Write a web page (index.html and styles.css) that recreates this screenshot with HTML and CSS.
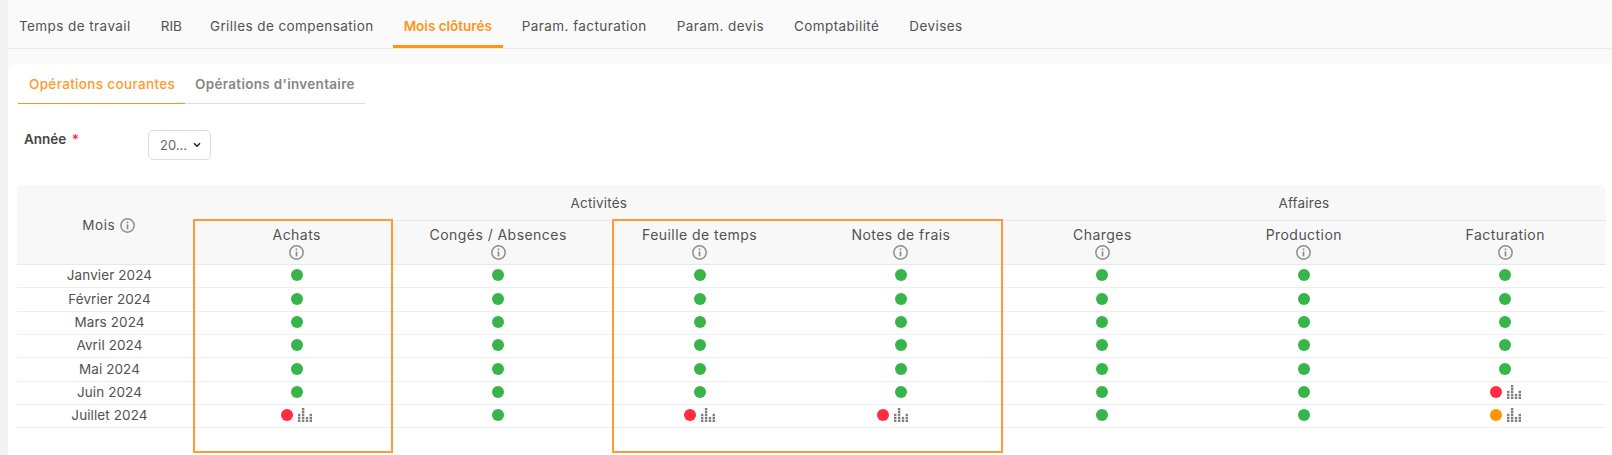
FILE: index.html
```html
<!DOCTYPE html>
<html lang="fr">
<head>
    <meta charset="utf-8">
    <title>Mois clôturés</title>
    <link rel="stylesheet" href="styles.css">
</head>
<body>
    <svg class="icon-defs" width="0" height="0">
        <symbol id="info" viewBox="0 0 14 14">
            <circle cx="7" cy="7" r="6.2" fill="none" stroke="#8e8e8e" stroke-width="1.4"/>
            <rect x="6.2" y="6" width="1.6" height="4.6" fill="#8e8e8e"/>
            <rect x="6.2" y="3.3" width="1.6" height="1.6" fill="#8e8e8e"/>
        </symbol>
        <symbol id="bars" viewBox="0 0 14 14">
            <g fill="#7e7e7e">
                <rect x="0" y="5.8" width="2.4" height="2.4"/><rect x="0" y="8.9" width="2.4" height="2.4"/><rect x="0" y="11.8" width="2.4" height="2.2"/>
                <rect x="3.9" y="0" width="2.4" height="2.4"/><rect x="3.9" y="2.9" width="2.4" height="2.4"/><rect x="3.9" y="5.8" width="2.4" height="2.4"/><rect x="3.9" y="8.9" width="2.4" height="2.4"/><rect x="3.9" y="11.8" width="2.4" height="2.2"/>
                <rect x="7.8" y="8.9" width="2.4" height="2.4"/><rect x="7.8" y="11.8" width="2.4" height="2.2"/>
                <rect x="11.6" y="5.8" width="2.4" height="2.4"/><rect x="11.6" y="8.9" width="2.4" height="2.4"/><rect x="11.6" y="11.8" width="2.4" height="2.2"/>
            </g>
        </symbol>
    </svg>

    <nav class="main-tabs">
        <a class="main-tab">Temps de travail</a>
        <a class="main-tab short">RIB</a>
        <a class="main-tab">Grilles de compensation</a>
        <a class="main-tab active">Mois clôturés</a>
        <a class="main-tab">Param. facturation</a>
        <a class="main-tab">Param. devis</a>
        <a class="main-tab">Comptabilité</a>
        <a class="main-tab">Devises</a>
    </nav>

    <div class="card">
        <div class="sub-tabs">
            <a class="sub-tab active">Opérations courantes</a>
            <a class="sub-tab">Opérations d'inventaire</a>
        </div>

        <div class="year-row">
            <label class="year-label">Année <span class="required">*</span></label>
            <div class="year-select">
                <span>20…</span>
                <svg width="8" height="6" viewBox="0 0 8 6"><path d="M1 1.2 4 4.2 7 1.2" fill="none" stroke="#222" stroke-width="1.5"/></svg>
            </div>
        </div>

        <div class="table-wrap">
            <table class="months">
                <colgroup>
                    <col class="col-month">
                    <col><col><col><col><col><col><col>
                </colgroup>
                <thead>
                    <tr class="group-row">
                        <th rowspan="2" class="month-head">Mois <svg class="info"><use href="#info"/></svg></th>
                        <th colspan="4">Activités</th>
                        <th colspan="3">Affaires</th>
                    </tr>
                    <tr class="activity-row">
                        <th>Achats<svg class="info"><use href="#info"/></svg></th>
                        <th>Congés / Absences<svg class="info"><use href="#info"/></svg></th>
                        <th>Feuille de temps<svg class="info"><use href="#info"/></svg></th>
                        <th>Notes de frais<svg class="info"><use href="#info"/></svg></th>
                        <th>Charges<svg class="info"><use href="#info"/></svg></th>
                        <th>Production<svg class="info"><use href="#info"/></svg></th>
                        <th>Facturation<svg class="info"><use href="#info"/></svg></th>
                    </tr>
                </thead>
                <tbody>
                    <tr>
                        <td class="month">Janvier 2024</td>
                        <td><i class="dot green"></i></td><td><i class="dot green"></i></td><td><i class="dot green"></i></td><td><i class="dot green"></i></td>
                        <td><i class="dot green"></i></td><td><i class="dot green"></i></td><td><i class="dot green"></i></td>
                    </tr>
                    <tr>
                        <td class="month">Février 2024</td>
                        <td><i class="dot green"></i></td><td><i class="dot green"></i></td><td><i class="dot green"></i></td><td><i class="dot green"></i></td>
                        <td><i class="dot green"></i></td><td><i class="dot green"></i></td><td><i class="dot green"></i></td>
                    </tr>
                    <tr>
                        <td class="month">Mars 2024</td>
                        <td><i class="dot green"></i></td><td><i class="dot green"></i></td><td><i class="dot green"></i></td><td><i class="dot green"></i></td>
                        <td><i class="dot green"></i></td><td><i class="dot green"></i></td><td><i class="dot green"></i></td>
                    </tr>
                    <tr>
                        <td class="month">Avril 2024</td>
                        <td><i class="dot green"></i></td><td><i class="dot green"></i></td><td><i class="dot green"></i></td><td><i class="dot green"></i></td>
                        <td><i class="dot green"></i></td><td><i class="dot green"></i></td><td><i class="dot green"></i></td>
                    </tr>
                    <tr>
                        <td class="month">Mai 2024</td>
                        <td><i class="dot green"></i></td><td><i class="dot green"></i></td><td><i class="dot green"></i></td><td><i class="dot green"></i></td>
                        <td><i class="dot green"></i></td><td><i class="dot green"></i></td><td><i class="dot green"></i></td>
                    </tr>
                    <tr>
                        <td class="month">Juin 2024</td>
                        <td><i class="dot green"></i></td><td><i class="dot green"></i></td><td><i class="dot green"></i></td><td><i class="dot green"></i></td>
                        <td><i class="dot green"></i></td><td><i class="dot green"></i></td>
                        <td><div class="flag"><i class="dot red"></i><svg class="bars"><use href="#bars"/></svg></div></td>
                    </tr>
                    <tr>
                        <td class="month">Juillet 2024</td>
                        <td><div class="flag"><i class="dot red"></i><svg class="bars"><use href="#bars"/></svg></div></td>
                        <td><i class="dot green"></i></td>
                        <td><div class="flag"><i class="dot red"></i><svg class="bars"><use href="#bars"/></svg></div></td>
                        <td><div class="flag shifted"><i class="dot red"></i><svg class="bars"><use href="#bars"/></svg></div></td>
                        <td><i class="dot green"></i></td>
                        <td><i class="dot green"></i></td>
                        <td><div class="flag"><i class="dot orange"></i><svg class="bars"><use href="#bars"/></svg></div></td>
                    </tr>
                </tbody>
            </table>
            <!-- cadres de mise en évidence par-dessus le tableau -->
            <div class="highlight highlight-achats"></div>
            <div class="highlight highlight-temps"></div>
        </div>
    </div>
</body>
</html>
```

FILE: styles.css
```css
html, body {
    height: 100%;
}
body {
    margin: 0;
    padding-left: 8px;
    background-color: #fafafa;
    box-shadow: inset 8px 0 0 #f3f3f3;
    font-family: 'Inter', 'Open Sans', sans-serif;
    font-size: 13.5px;
    color: #525252;
    overflow: hidden;
    box-sizing: border-box;
}
.icon-defs {
    position: absolute;
}

/* Onglets principaux */
.main-tabs {
    display: flex;
    gap: 8px;
    height: 48px;
    border-bottom: 1px solid #ebebeb;
    box-sizing: content-box;
}
.main-tab {
    display: flex;
    align-items: center;
    padding: 7px 11px 0;
    letter-spacing: 0.42px;
    white-space: nowrap;
    border-bottom: 3px solid transparent;
    box-sizing: border-box;
    height: 48px;
}
.main-tab.short {
    letter-spacing: 0;
    padding-right: 9px;
}
.main-tab.active {
    color: #ff9416;
    font-weight: 600;
    letter-spacing: 0;
    border-bottom-color: #ff9416;
}

/* Carte */
.card {
    margin-top: 15px;
    height: 391px;
    padding: 0 6px 0 10px;
    background-color: #ffffff;
    border-radius: 8px 0 0 0;
    overflow: hidden;
}
.sub-tabs {
    display: flex;
    width: 347px;
    height: 39px;
    border-bottom: 1px solid #dedede;
}
.sub-tab {
    display: flex;
    align-items: center;
    flex-shrink: 0;
    padding: 0 10px;
    height: 39px;
    font-weight: 600;
    letter-spacing: 0.3px;
    white-space: nowrap;
    color: #868686;
    box-sizing: border-box;
}
.sub-tab.active {
    color: #ff9a2e;
    font-weight: 500;
    letter-spacing: 0.34px;
    border-bottom: 1px solid #ff9416;
    height: 40px;
    padding: 0 10px 0 11px;
}
.year-row {
    display: flex;
    align-items: flex-start;
    margin-top: 26px;
    margin-left: 6px;
}
.year-label {
    width: 124px;
    font-weight: 600;
    color: #444;
    line-height: 18px;
    margin-top: 0;
}
.required {
    color: #ff2d3f;
    margin-left: 2px;
}
.year-select {
    display: flex;
    align-items: center;
    justify-content: space-between;
    width: 63px;
    height: 30px;
    padding: 0 9px 0 11px;
    border: 1px solid #dcdcdc;
    border-radius: 5px;
    box-sizing: border-box;
    font-size: 13px;
    color: #666;
}

/* Tableau des mois */
.table-wrap {
    position: relative;
    margin-top: 25px;
    margin-left: -1px;
    width: 1589px;
}
.months {
    width: 100%;
    table-layout: fixed;
    border-collapse: separate;
    border-spacing: 0;
}
.col-month {
    width: 179px;
}
.months th {
    font-weight: 400;
    background-color: #f8f8f8;
    text-align: center;
    padding: 0;
    letter-spacing: 0.1px;
}
.group-row th {
    height: 36px;
    border-bottom: 1px solid #e8e8e8;
    box-sizing: border-box;
    letter-spacing: 0.2px;
}
.group-row th:first-child {
    border-top-left-radius: 6px;
}
.group-row th:last-child {
    border-top-right-radius: 6px;
}
.months th.month-head {
    border-bottom: 1px solid #e8e8e8;
    padding-left: 4px;
    letter-spacing: 0.6px;
}
.months .activity-row th {
    height: 44px;
    box-sizing: border-box;
    border-bottom: 1px solid #e8e8e8;
    vertical-align: top;
    padding-top: 5px;
    line-height: 17px;
    font-size: 14px;
    letter-spacing: 0.45px;
}
.info {
    width: 15px;
    height: 15px;
    vertical-align: -3px;
}
.activity-row .info {
    display: block;
    margin: 2px auto 0;
}
.months td {
    height: 23.33px;
    padding: 0;
    text-align: center;
    border-bottom: 1px solid #eeeeee;
    box-sizing: border-box;
    line-height: 1;
}
.months td.month {
    padding-left: 6px;
    letter-spacing: 0.1px;
}
.dot {
    display: inline-block;
    width: 12px;
    height: 12px;
    margin-bottom: 2px;
    border-radius: 50%;
    vertical-align: middle;
}
.dot.green {
    background-color: #38b54a;
}
.dot.red {
    background-color: #ff2d3f;
}
.dot.orange {
    background-color: #ff9500;
}
.flag {
    display: flex;
    align-items: center;
    justify-content: center;
    gap: 5px;
}
.flag.shifted {
    margin-right: 16px;
}
.bars {
    width: 14px;
    height: 14px;
    margin-bottom: 2px;
}

/* Cadres orange */
.highlight {
    position: absolute;
    top: 34px;
    height: 234px;
    border: 2px solid #ff9a36;
    box-sizing: border-box;
}
.highlight-achats {
    left: 176px;
    width: 200px;
}
.highlight-temps {
    left: 595px;
    width: 391px;
}
```
